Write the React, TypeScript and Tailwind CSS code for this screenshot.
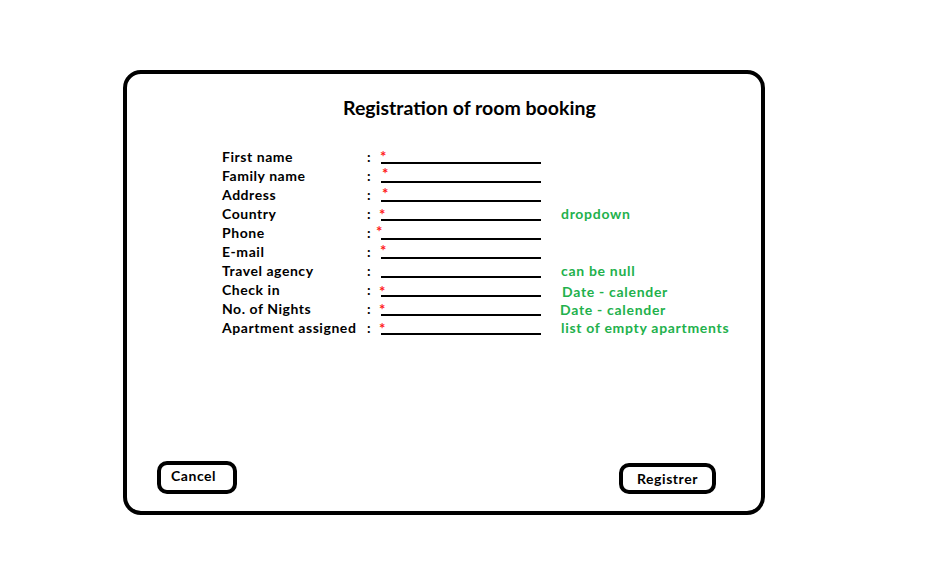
import React from "react";

type Row = {
	label: string
	required: boolean
	star: string
	note?: string
	noteClass?: string
}

const ROWS: Row[] = [
	{label: "First name", required: true, star: "left-[-1px] top-[4px]"},
	{label: "Family name", required: true, star: "left-[1px] top-[2px]"},
	{label: "Address", required: true, star: "left-[1px] top-[3px]"},
	{label: "Country", required: true, star: "left-[-2px] top-[5px]", note: "dropdown"},
	{label: "Phone", required: true, star: "left-[-5px] top-[3px]"},
	{label: "E-mail", required: true, star: "left-[-1px] top-[3px]"},
	{label: "Travel agency", required: false, star: "", note: "can be null"},
	{label: "Check in", required: true, star: "left-[-2px] top-[6px]", note: "Date - calender", noteClass: "pl-[21px] pt-[2px]"},
	{label: "No. of Nights", required: true, star: "left-[-2px] top-[5px]", note: "Date - calender", noteClass: "pl-[19px] pt-[1px]"},
	{label: "Apartment assigned", required: true, star: "left-[-2px] top-[5px]", note: "list of empty apartments"},
]

function FormRow({row}: {row: Row}) {
	return (
		<div className="flex h-[19px] leading-[19px]">
			<div className="w-[145px] shrink-0 whitespace-nowrap">{row.label}</div>
			<div className="w-[14px] shrink-0">:</div>
			<div className="relative w-[160px] h-[17px] shrink-0 border-b-2 border-black">
				{row.required && (
					<span className={`absolute ${row.star} text-[#ff1a1a] text-[15px] leading-[10px] tracking-normal`}>*</span>
				)}
			</div>
			{row.note && (
				<div className={`${row.noteClass ?? "pl-[20px]"} text-[#22b14c] whitespace-nowrap tracking-[0.7px]`}>{row.note}</div>
			)}
		</div>
	)
}

export default function App() {
	return (
		<div className="w-[929px] h-[565px] bg-white pt-[70px] pl-[123px] text-black font-bold text-[14px] tracking-[0.55px]"
			 style={{fontFamily: "Lato, 'Open Sans', sans-serif"}}>
			<div className="w-[642px] h-[445px] border-4 border-black rounded-[18px] flex flex-col">
				<h1 className="mt-[22px] pl-[216px] text-[19.5px] leading-[24px] tracking-normal">Registration of room booking</h1>
				<div className="mt-[27px] pl-[95px] flex flex-col">
					{ROWS.map((row) => <FormRow key={row.label} row={row}/>)}
				</div>
				<div className="mt-auto mb-[17px] pl-[30px] pr-[45px] flex items-end justify-between">
					<button className="w-[80px] h-[33px] border-4 border-black rounded-[10px] text-left pl-[10px] pb-[4px]">
						Cancel
					</button>
					<button className="w-[97px] h-[31px] border-4 border-black rounded-[10px] text-center pb-[1px]">
						Registrer
					</button>
				</div>
			</div>
		</div>
	)
}
